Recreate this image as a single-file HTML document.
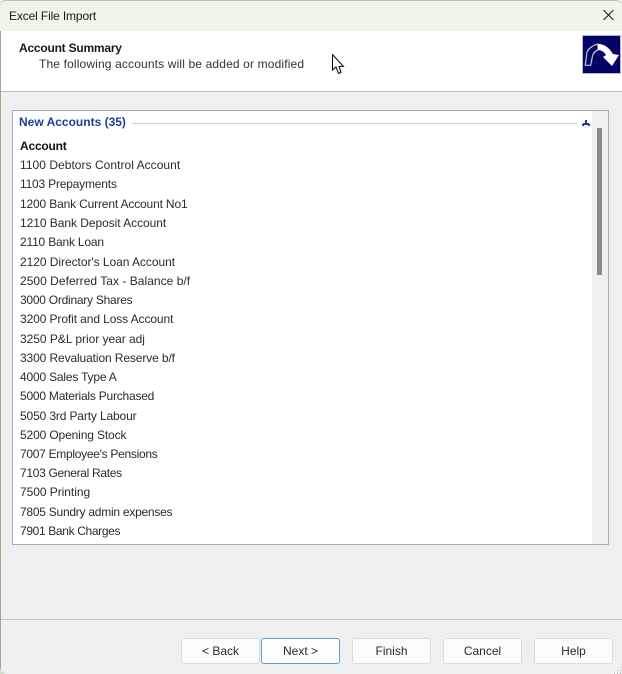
<!DOCTYPE html>
<html><head><meta charset="utf-8"><style>
html,body{margin:0;padding:0;background:#fff}
#w{position:relative;width:622px;height:674px;overflow:hidden;background:#efefef;font-family:"Liberation Sans",sans-serif;font-size:12px;color:#222}
.a{position:absolute;white-space:nowrap}
.r{position:absolute;left:20px;height:16px;line-height:16px;white-space:nowrap;color:#2b2b2b}
.b{position:absolute;top:638px;width:77px;height:24px;line-height:24px;text-align:center;background:#fbfbfb;border:1px solid #dcdcdc;border-radius:3px;color:#2b2b2b}
</style></head><body><div id="w">
<div class="a" style="left:0;top:0;width:622px;height:31px;background:#eef6e8;border-top:1px solid #bdbdbd;box-sizing:border-box;border-radius:6px 6px 0 0"></div>
<div class="a" style="left:9px;top:8px;line-height:16px;color:#1a1a1a;letter-spacing:-.135px">Excel File Import</div>
<svg class="a" style="left:603px;top:10px" width="11" height="10"><path d="M.5 0L10.5 10M10.5 0L.5 10" stroke="#222" stroke-width="1.1" fill="none"/></svg>
<div class="a" style="left:0;top:31px;width:622px;height:60px;background:#fff"></div>
<div class="a" style="left:0;top:91px;width:622px;height:1px;background:#bdbdbd"></div>
<div class="a" style="left:19px;top:40px;line-height:16px;font-weight:bold;color:#1a1a1a;letter-spacing:-.22px">Account Summary</div>
<div class="a" style="left:39px;top:56px;line-height:16px;color:#333;letter-spacing:.146px">The following accounts will be added or modified</div>
<svg class="a" style="left:582px;top:35px" width="39" height="39" viewBox="0 0 39 39"><defs><pattern id="g" width="2" height="2" patternUnits="userSpaceOnUse"><rect width="2" height="2" fill="#02025e"/><rect width="1" height="1" fill="#0a0a80"/></pattern></defs><rect width="39" height="39" fill="url(#g)"/><rect x=".5" y=".5" width="38" height="38" fill="none" stroke="#b9b9dd"/><path d="M3.3 30.3L5 17Q8 11 16 9L16 15Q11.5 16.5 10.5 21L8.7 30.3Z" fill="none" stroke="#c4c4d2" stroke-width="1.2"/><path d="M16 9Q25 9 31 19L37 20L30 31L21 22L24 20Q21 15 16 15Z" fill="#fff"/></svg>
<svg class="a" style="left:332px;top:54px" width="13" height="21" viewBox="0 0 13 21"><path d="M.5.5V16L4 13L6.5 19.5L9 18.5L7 12.5H11.5Z" fill="#fff" stroke="#000"/></svg>

<div class="a" style="left:12px;top:110px;width:595px;height:433px;background:#fff;border:1px solid #a8adb5"></div>
<div class="a" style="left:592px;top:111px;width:16px;height:433px;background:#f0f0f0"></div>
<div class="a" style="left:597px;top:128px;width:5px;height:147px;background:#8b8b8b"></div>
<div class="a" style="left:19px;top:114px;line-height:16px;font-weight:bold;color:#1c3f94">New Accounts (35)</div>
<div class="a" style="left:132px;top:123px;width:445px;height:1px;background:#c3d3ee"></div>
<svg class="a" style="left:582px;top:120px" width="8" height="6"><path d="M3 0H5V3H7V4H8V6H6V5H2V6H0V4H1V3H3Z" fill="#1c3f94"/></svg>
<div class="r" style="top:138px;font-weight:bold;color:#111;letter-spacing:-.2px">Account</div>
<div class="r" style="top:157px;letter-spacing:.036px">1100 Debtors Control Account</div>
<div class="r" style="top:176px;letter-spacing:-.2px">1103 Prepayments</div>
<div class="r" style="top:196px;letter-spacing:-.16px">1200 Bank Current Account No1</div>
<div class="r" style="top:215px;letter-spacing:-.05px">1210 Bank Deposit Account</div>
<div class="r" style="top:234px;letter-spacing:-.19px">2110 Bank Loan</div>
<div class="r" style="top:254px;letter-spacing:-.05px">2120 Director's Loan Account</div>
<div class="r" style="top:273px;letter-spacing:.03px">2500 Deferred Tax - Balance b/f</div>
<div class="r" style="top:292px;letter-spacing:-.25px">3000 Ordinary Shares</div>
<div class="r" style="top:311px;letter-spacing:-.1px">3200 Profit and Loss Account</div>
<div class="r" style="top:331px;letter-spacing:-.03px">3250 P&amp;L prior year adj</div>
<div class="r" style="top:350px;letter-spacing:-.115px">3300 Revaluation Reserve b/f</div>
<div class="r" style="top:369px;letter-spacing:-.19px">4000 Sales Type A</div>
<div class="r" style="top:388px;letter-spacing:-.22px">5000 Materials Purchased</div>
<div class="r" style="top:408px;letter-spacing:-.14px">5050 3rd Party Labour</div>
<div class="r" style="top:427px;letter-spacing:-.135px">5200 Opening Stock</div>
<div class="r" style="top:446px;letter-spacing:-.29px">7007 Employee's Pensions</div>
<div class="r" style="top:465px;letter-spacing:-.31px">7103 General Rates</div>
<div class="r" style="top:484px;letter-spacing:-.05px">7500 Printing</div>
<div class="r" style="top:504px;letter-spacing:-.25px">7805 Sundry admin expenses</div>
<div class="r" style="top:523px;letter-spacing:-.35px">7901 Bank Charges</div>

<div class="a" style="left:0;top:619px;width:622px;height:1px;background:#c4c4c4"></div>
<div class="a" style="left:0;top:31px;width:1px;height:640px;background:#8fb08a"></div>
<svg class="a" style="left:0;top:668px" width="6" height="6"><path d="M0 0Q1 4 6 6H0Z" fill="#cfe0c8"/></svg>
<div class="b" style="left:181px">&lt; Back</div>
<div class="b" style="left:261px;border-color:#5a9fd6;background:#fdfdfd">Next &gt;</div>
<div class="b" style="left:352px">Finish</div>
<div class="b" style="left:443px">Cancel</div>
<div class="b" style="left:534px">Help</div>
<svg class="a" style="left:614px;top:666px" width="8" height="8"><path d="M6 1h1v1H6zM3 4h1v1H3zM6 4h1v1H6zM0 7h1v1H0zM3 7h1v1H3zM6 7h1v1H6z" fill="#b5b5b5"/></svg>
</div></body></html>
